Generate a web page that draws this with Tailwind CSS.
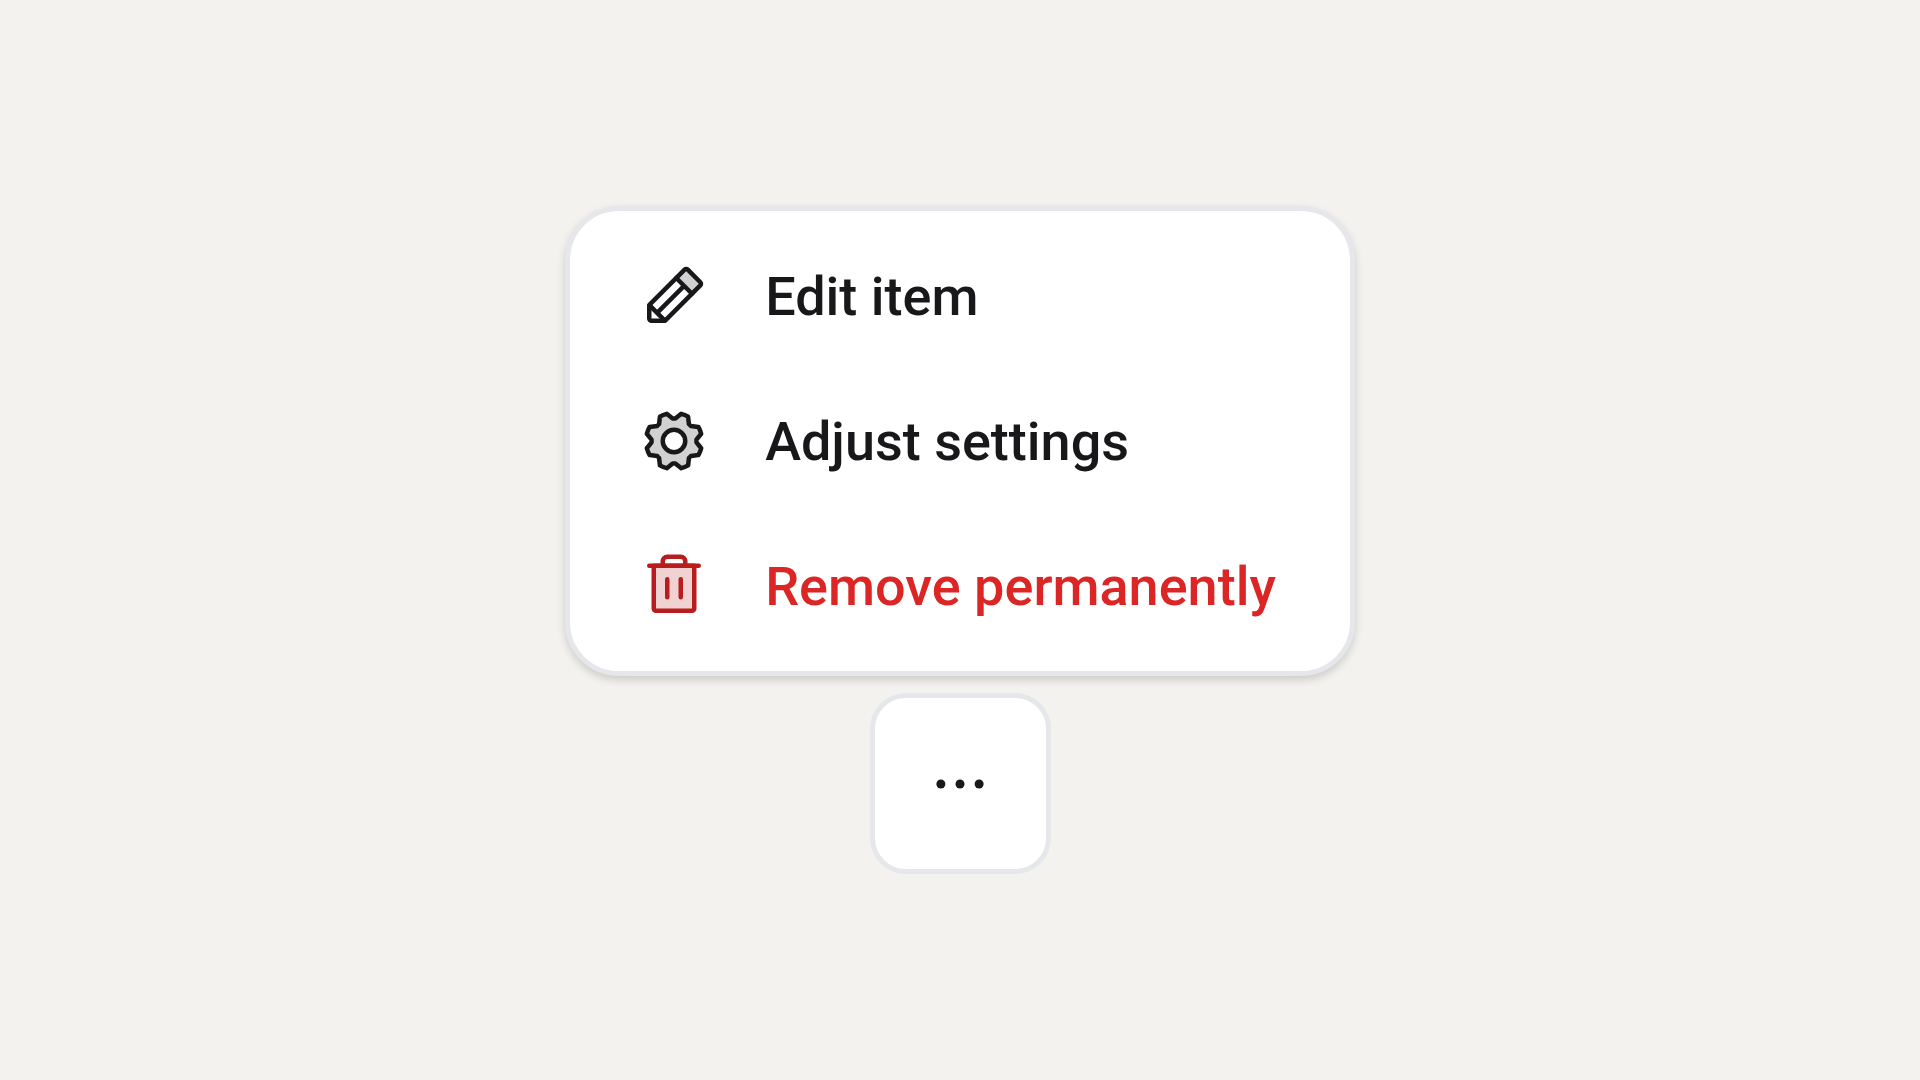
<!DOCTYPE html>
<html lang="en">
<head>
    <meta charset="UTF-8">
    <meta name="viewport" content="width=device-width, initial-scale=1.0">
    <title>Item Menu</title>
    <script src="https://cdn.jsdelivr.net/npm/@tailwindcss/browser@4"></script>
</head>
<body class="min-h-screen flex flex-col items-center justify-center gap-[17px] bg-[#f3f2ee] font-[Roboto,sans-serif]">

    <div id="itemMenu" role="menu" class="flex flex-col gap-px rounded-[54px] border-5 border-gray-200 bg-white py-[13px] text-[54px] font-medium text-[#18181b] shadow-[0_4px_9px_rgba(0,0,0,0.16)]">
        <button type="button" role="menuitem" class="flex h-36 items-center gap-[55px] pl-[68px] pr-[74px]">
            <svg class="size-[72px] shrink-0" viewBox="0 0 256 256" fill="none" stroke="currentColor" stroke-width="16" stroke-linecap="round" stroke-linejoin="round" aria-hidden="true">
                <path d="M221.66,90.34,192,120,136,64l29.66-29.66a8,8,0,0,1,11.31,0L221.66,79A8,8,0,0,1,221.66,90.34Z" fill="currentColor" fill-opacity="0.2" stroke="none"/>
                <path d="M92.69,216H48a8,8,0,0,1-8-8V163.31a8,8,0,0,1,2.34-5.65L165.66,34.34a8,8,0,0,1,11.31,0L221.66,79a8,8,0,0,1,0,11.31L98.34,213.66A8,8,0,0,1,92.69,216Z"/>
                <path d="M136,64l56,56M164,92L68,188M95.49,215.49,40.51,160.51"/>
            </svg>
            <span>Edit item</span>
        </button>
        <button type="button" role="menuitem" class="flex h-36 items-center gap-[55px] pl-[68px] pr-[74px]">
            <svg class="size-[72px] shrink-0" viewBox="0 0 256 256" fill="currentColor" fill-opacity="0.2" stroke="currentColor" stroke-width="16" stroke-linecap="round" stroke-linejoin="round" aria-hidden="true">
                <path d="M207.86,123.18l16.78-21a99.14,99.14,0,0,0-10.07-24.29l-26.7-3a81,81,0,0,0-6.81-6.81l-3-26.71a99.43,99.43,0,0,0-24.3-10l-21,16.77a81.59,81.59,0,0,0-9.64,0l-21-16.78A99.14,99.14,0,0,0,77.91,41.43l-3,26.7a81,81,0,0,0-6.81,6.81l-26.71,3a99.43,99.43,0,0,0-10,24.3l16.77,21a81.59,81.59,0,0,0,0,9.64l-16.78,21a99.14,99.14,0,0,0,10.07,24.29l26.7,3a81,81,0,0,0,6.81,6.81l3,26.71a99.43,99.43,0,0,0,24.3,10l21-16.77a81.59,81.59,0,0,0,9.64,0l21,16.78a99.14,99.14,0,0,0,24.29-10.07l3-26.7a81,81,0,0,0,6.81-6.81l26.71-3a99.43,99.43,0,0,0,10-24.3l-16.77-21A81.59,81.59,0,0,0,207.86,123.18ZM128,168a40,40,0,1,1,40-40A40,40,0,0,1,128,168Z"/>
            </svg>
            <span>Adjust settings</span>
        </button>
        <button type="button" role="menuitem" class="flex h-36 items-center gap-[55px] pl-[68px] pr-[74px] text-[#dc2626]">
            <svg class="size-[72px] shrink-0 text-[#b91c1c]" viewBox="0 0 256 256" fill="none" stroke="currentColor" stroke-width="16" stroke-linecap="round" stroke-linejoin="round" aria-hidden="true">
                <path d="M200,56V208a8,8,0,0,1-8,8H64a8,8,0,0,1-8-8V56Z" fill="currentColor" fill-opacity="0.2"/>
                <path d="M216,56H40M104,104v64M152,104v64M168,56V40a16,16,0,0,0-16-16H104A16,16,0,0,0,88,40V56"/>
            </svg>
            <span>Remove permanently</span>
        </button>
    </div>

    <button type="button" aria-label="More options" aria-haspopup="menu" aria-controls="itemMenu" class="flex size-[181px] items-center justify-center rounded-[36px] border-5 border-gray-200 bg-white text-[#18181b]">
        <svg class="size-[72px]" viewBox="0 0 256 256" fill="currentColor" aria-hidden="true">
            <circle cx="60" cy="128" r="16"/>
            <circle cx="128" cy="128" r="16"/>
            <circle cx="196" cy="128" r="16"/>
        </svg>
    </button>

</body>
</html>
